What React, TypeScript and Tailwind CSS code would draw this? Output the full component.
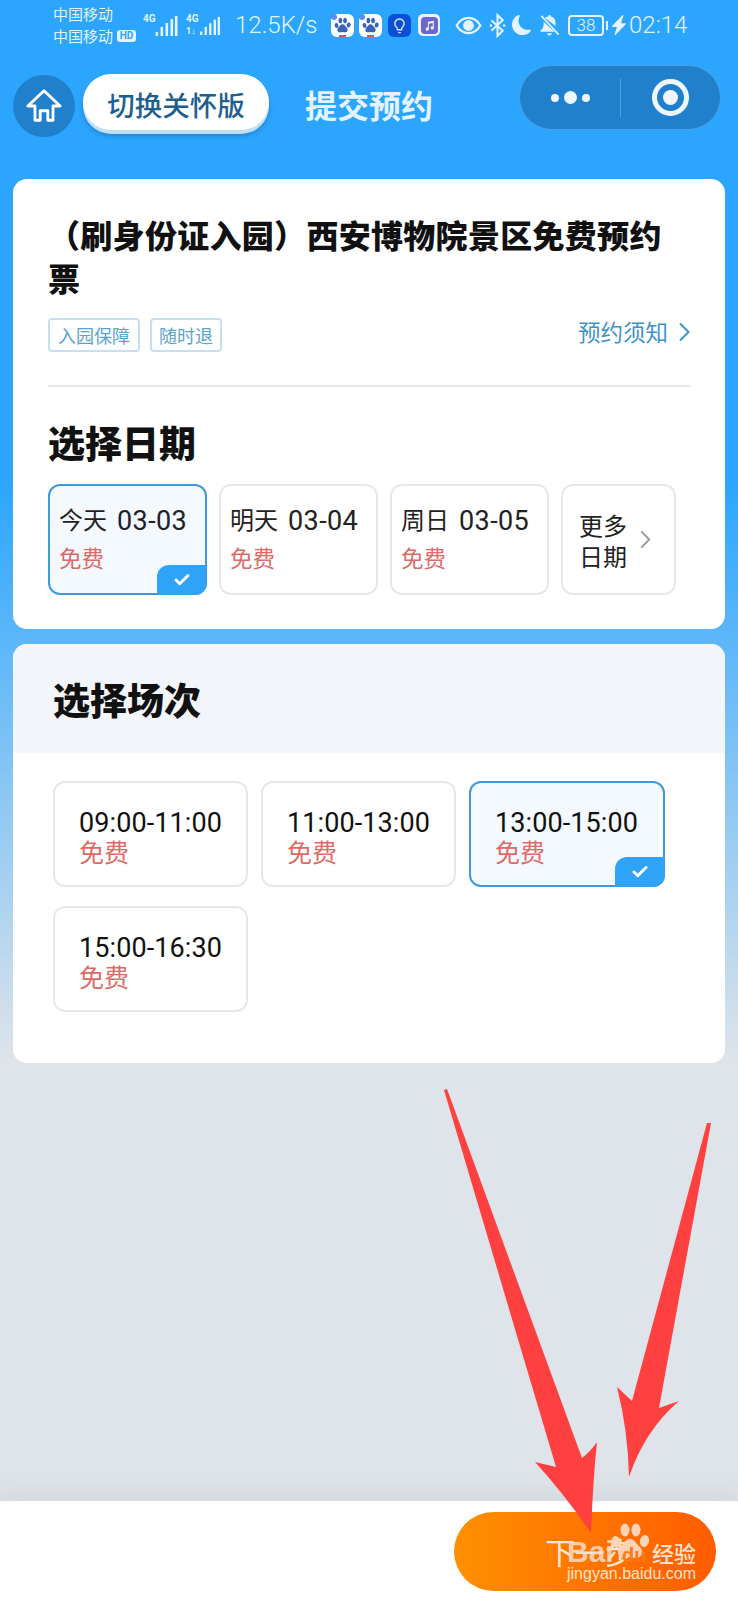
import { Check } from 'lucide-react'
import { BsMoonFill, BsLightningChargeFill } from 'react-icons/bs'

const dates = [
  { label: '今天', date: '03-03', selected: true },
  { label: '明天', date: '03-04', selected: false },
  { label: '周日', date: '03-05', selected: false },
]

const slots = [
  { time: '09:00-11:00', selected: false },
  { time: '11:00-13:00', selected: false },
  { time: '13:00-15:00', selected: true },
  { time: '15:00-16:30', selected: false },
]

function Paw({ className, fill }: { className?: string; fill: string }) {
  return (
    <svg viewBox="0 0 40 40" className={className} fill={fill}>
      <ellipse cx="6" cy="20" rx="4.5" ry="6" transform="rotate(-15 6 20)" />
      <ellipse cx="15" cy="8" rx="4.5" ry="6.5" />
      <ellipse cx="26" cy="8" rx="4.5" ry="6.5" />
      <ellipse cx="34.5" cy="19" rx="4.5" ry="6" transform="rotate(15 34.5 19)" />
      <path d="M20 17c5 0 6 5 10 8 4 4 2 12-5 11-2 0-3-1-5-1s-3 1-5 1c-7 1-9-7-5-11 4-3 5-8 10-8z" />
    </svg>
  )
}

function SignalBars({ className }: { className?: string }) {
  return (
    <svg viewBox="0 0 22 20" className={className} fill="#e3f3ff">
      <rect x="0" y="16" width="2.6" height="4" />
      <rect x="5" y="11" width="2.6" height="9" />
      <rect x="10" y="7" width="2.6" height="13" />
      <rect x="15" y="3" width="2.6" height="17" />
      <rect x="19.4" y="0" width="2.6" height="20" />
    </svg>
  )
}

function Chevron({ className }: { className?: string }) {
  return (
    <svg viewBox="0 0 12 20" className={className} fill="none" stroke="currentColor" strokeWidth="2">
      <path d="M2 1.500L10.500 10L2 18.500" />
    </svg>
  )
}

function BaiduApp({ ml }: { ml: string }) {
  return (
    <div className={`relative w-[23px] h-[23px] rounded-[6px] bg-white flex items-center justify-center ${ml}`}>
      <Paw className="w-[17px] h-[17px]" fill="#3a64b8" />
      <div className="absolute left-0 top-0 w-[6px] h-[6px] rounded-full bg-[#5a8fe8]" />
      <div className="absolute bottom-0 left-[8px] w-[7px] h-[2px] bg-[#d9534f]" />
    </div>
  )
}

function StatusBar() {
  return (
    <div className="h-[50px] flex items-center pl-[53px] text-[#e3f3ff]">
      <div className="w-[84px] text-[15px] leading-[22px]">
        <div>中国移动</div>
        <div className="flex items-center">
          中国移动
          <span className="ml-[4px] w-[19px] h-[12px] rounded-[3px] bg-[#e3f3ff] text-[#2ba5fe] text-[10px] leading-[12px] font-bold text-center font-['Roboto']">
            HD
          </span>
        </div>
      </div>
      <div className="relative ml-[6px] w-[35px] h-[22px]">
        <span className="absolute left-0 top-0 text-[10px] leading-[10px] font-bold font-['Roboto']">4G</span>
        <SignalBars className="absolute right-0 bottom-0 w-[23px] h-[20px]" />
      </div>
      <div className="relative ml-[8px] w-[34px] h-[22px]">
        <span className="absolute left-0 top-0 text-[10px] leading-[10px] font-bold font-['Roboto']">4G</span>
        <span className="absolute left-0 bottom-0 text-[9px] leading-[9px] font-bold font-['Roboto']">1↓</span>
        <SignalBars className="absolute right-0 bottom-0 w-[20px] h-[20px]" />
      </div>
      <span className="ml-[15px] w-[81px] text-[24px] font-['Roboto'] font-light whitespace-nowrap">12.5K/s</span>
      <BaiduApp ml="ml-[15px]" />
      <BaiduApp ml="ml-[5px]" />
      <div className="ml-[6px] w-[23px] h-[23px] rounded-[6px] bg-[#0b4fd8] flex items-center justify-center">
        <svg viewBox="0 0 24 24" className="w-[17px] h-[17px]" fill="none" stroke="#dbe8ff" strokeWidth="2">
          <path d="M9 18h6M10 22h4M8 14.500A6.500 6.500 0 1 1 16 14.500c-.8.7-1 1.500-1 3.500H9c0-2-.2-2.800-1-3.500z" />
        </svg>
      </div>
      <div className="ml-[7px] w-[22px] h-[22px] rounded-[5px] bg-[#eef0fb] flex items-center justify-center">
        <div className="w-[17px] h-[17px] rounded-[4px] bg-[#6a68cf] flex items-center justify-center">
          <svg viewBox="0 0 24 24" className="w-[13px] h-[13px]" fill="#eef0fb">
            <path d="M9 5l11-2v13.500a3 3 0 1 1-2-2.800V7.500l-7 1.300v9.700a3 3 0 1 1-2-2.800z" />
          </svg>
        </div>
      </div>
      <svg viewBox="0 0 28 20" className="ml-[15px] w-[27px] h-[19px]" fill="none" stroke="#e3f3ff" strokeWidth="2.400">
        <path d="M1.500 10C5 4 9 2 14 2s9 2 12.500 8C23 16 19 18 14 18S5 16 1.500 10z" />
        <circle cx="14" cy="10" r="4.500" fill="#e3f3ff" />
      </svg>
      <svg viewBox="0 0 18 26" className="ml-[7px] w-[17px] h-[25px]" fill="none" stroke="#e3f3ff" strokeWidth="2.200">
        <path d="M2.500 7.500L14.500 18.500L9 24V2L14.500 7.500L2.500 18.500" />
        <circle cx="2" cy="13" r="1.400" fill="#e3f3ff" stroke="none" />
        <circle cx="16" cy="13" r="1.400" fill="#e3f3ff" stroke="none" />
      </svg>
      <BsMoonFill className="ml-[6px] w-[20px] h-[20px]" />
      <svg viewBox="0 0 22 24" className="ml-[7px] w-[21px] h-[23px]" fill="#e3f3ff">
        <path d="M9.500 2.500a1.500 1.500 0 0 1 3 0c3 .7 4.800 3.200 4.800 6.500v3.500L6 3.800c.9-.7 2.100-1.100 3.500-1.300zM4.900 8L16.200 18.500H1.500v-1.200c2.200-1.600 3.400-3.900 3.400-7.300zM8.500 20h5a2.500 2.500 0 0 1-5 0z" />
        <path d="M2.500 2L20.500 21.500" stroke="#e3f3ff" strokeWidth="1.800" />
      </svg>
      <div className="ml-[8px] flex items-center">
        <div className="w-[36px] h-[21px] rounded-[4px] border-2 border-[#e3f3ff] text-[17px] leading-[17px] text-center font-['Roboto'] font-light">
          38
        </div>
        <div className="ml-[2px] w-[2px] h-[9px] bg-[#e3f3ff]" />
      </div>
      <BsLightningChargeFill className="ml-[1px] w-[20px] h-[20px]" />
      <span className="text-[24px] leading-none font-['Roboto'] font-light whitespace-nowrap">02:14</span>
    </div>
  )
}

function NavBar() {
  return (
    <div className="h-[129px] flex items-start">
      <div className="ml-[13px] mt-[25px] w-[62px] h-[62px] rounded-full bg-[#2080cc] flex items-center justify-center">
        <svg viewBox="0 0 40 40" className="w-[38px] h-[38px]" fill="none" stroke="#ffffff" strokeWidth="3" strokeLinejoin="round">
          <path d="M20 4L37 20H29.500V35H24V25H16V35H10.500V20H3z" />
        </svg>
      </div>
      <div className="ml-[8px] mt-[24px] w-[186px] h-[56px] rounded-full bg-white shadow-[0_4px_0_#bfdff5,0_6px_4px_rgba(20,90,150,0.45)] flex items-center justify-center pt-[6px] text-[27.500px] font-medium text-[#1f5f8f]">
        切换关怀版
      </div>
      <div className="ml-[36px] mt-[32px] text-[32px] leading-[44px] font-bold text-[#e4f3ff] whitespace-nowrap">提交预约</div>
      <div className="ml-[86px] mt-[15px] w-[202px] h-[65px] rounded-full bg-[#2080cc] border border-[#4aa3e6] flex items-center">
        <div className="w-[100px] flex items-center justify-center gap-[5px]">
          <span className="w-[8px] h-[8px] rounded-full bg-[#eef7ff]" />
          <span className="w-[13px] h-[13px] rounded-full bg-[#eef7ff]" />
          <span className="w-[8px] h-[8px] rounded-full bg-[#eef7ff]" />
        </div>
        <div className="w-px h-[39px] bg-[#4f9fdd]" />
        <div className="flex-1 flex items-center justify-center">
          <div className="w-[37px] h-[37px] rounded-full border-[5px] border-[#eef7ff] flex items-center justify-center">
            <div className="w-[15px] h-[15px] rounded-full bg-[#eef7ff]" />
          </div>
        </div>
      </div>
    </div>
  )
}

function CheckCorner() {
  return (
    <div className="absolute -right-[2px] -bottom-[2px] w-[50px] h-[30px] rounded-tl-[12px] rounded-br-[12px] bg-[#2ea3f7] flex items-center justify-center">
      <Check className="w-[18px] h-[18px] text-white" strokeWidth={4} />
    </div>
  )
}

function DateCard({ label, date, selected }: { label: string; date: string; selected: boolean }) {
  return (
    <div className={`relative w-[159px] h-[111px] rounded-[12px] border-2 pl-[9px] ${selected ? 'border-[#3f9ad9] bg-[#f3f9fe]' : 'border-[#e6e9ec] bg-white'}`}>
      <div className="mt-[18px] flex items-center text-[24px] leading-[34px] text-[#222222] whitespace-nowrap font-['Roboto','Noto_Sans_CJK_SC',sans-serif]">
        {label}
        <span className="ml-[10px] text-[27px] tracking-[0.4px]">{date}</span>
      </div>
      <div className="mt-[3px] text-[22.500px] leading-[32px] text-[#de6a66]">免费</div>
      {selected && <CheckCorner />}
    </div>
  )
}

function SlotCard({ time, selected }: { time: string; selected: boolean }) {
  return (
    <div className={`relative h-[106px] rounded-[12px] border-2 pl-[24px] ${selected ? 'border-[#3f9ad9] bg-[#f3f9fe]' : 'border-[#e6e9ec] bg-white'}`}>
      <div className="mt-[23px] text-[27px] tracking-[0.1px] leading-[34px] text-[#111111] font-['Roboto',sans-serif]">{time}</div>
      <div className="text-[25px] leading-[32px] -mt-[5px] text-[#de6a66]">免费</div>
      {selected && <CheckCorner />}
    </div>
  )
}

function Arrows() {
  return (
    <svg viewBox="0 0 738 1600" className="absolute inset-0 w-[738px] h-[1600px] pointer-events-none" fill="#ff4040">
      <path d="M444 1090L447 1089L582 1458Q590 1452 597 1442Q593 1480 591 1533Q565 1495 535 1462L556 1467z" />
      <path d="M707 1123L711 1123L659 1408L679 1401Q645 1430 629 1477Q628 1430 617 1387L632 1401z" />
    </svg>
  )
}

export default function App() {
  return (
    <div className="relative w-[738px] h-[1600px] overflow-hidden flex flex-col bg-[linear-gradient(180deg,#2ba5fe_0px,#2ba5fe_480px,#dfe4ea_1065px)] font-['Noto_Sans_CJK_SC','Noto_Sans',sans-serif]">
      <StatusBar />
      <NavBar />

      <div className="mx-[13px] rounded-[14px] bg-white px-[35px] pt-[34px] pb-[34px]">
        <h1 className="text-[32px] tracking-[0.3px] leading-[43px] font-black text-[#111111]">（刷身份证入园）西安博物院景区免费预约票</h1>
        <div className="mt-[19px] flex items-center">
          <span className="h-[34px] w-[92px] rounded-[4px] border-2 border-[#c5e0ee] text-center text-[18px] leading-[30px] text-[#5aa5cf]">入园保障</span>
          <span className="ml-[10px] h-[34px] w-[72px] rounded-[4px] border-2 border-[#c5e0ee] text-center text-[18px] leading-[30px] text-[#5aa5cf]">随时退</span>
          <div className="ml-auto -mt-[6px] flex items-center text-[22.500px] text-[#3d93cb]">
            预约须知
            <Chevron className="ml-[10px] w-[12px] h-[20px]" />
          </div>
        </div>
        <div className="mt-[33px] h-[2px] bg-[#e5e7eb]" />
        <h2 className="mt-[30px] text-[37px] leading-[50px] font-black text-[#111111]">选择日期</h2>
        <div className="mt-[17px] flex gap-[12px]">
          {dates.map((d) => (
            <DateCard key={d.date} {...d} />
          ))}
          <div className="w-[115px] h-[111px] rounded-[12px] border-2 border-[#e6e9ec] bg-white flex items-center pl-[16px]">
            <div className="text-[24px] leading-[31px] text-[#222222]">
              更多
              <br />
              日期
            </div>
            <Chevron className="ml-[12px] w-[12px] h-[19px] text-[#9a9a9a]" />
          </div>
        </div>
      </div>

      <div className="mx-[13px] mt-[15px] rounded-[14px] overflow-hidden bg-white">
        <div className="h-[109px] bg-[#f2f6fa] flex items-center pl-[40px]">
          <h2 className="text-[37px] leading-[50px] font-black text-[#111111]">选择场次</h2>
        </div>
        <div className="grid grid-cols-[195px_195px_196px] gap-x-[13px] gap-y-[19px] pl-[40px] pt-[28px] pb-[51px]">
          {slots.map((s) => (
            <SlotCard key={s.time} {...s} />
          ))}
        </div>
      </div>

      <div className="mt-auto h-[99px] bg-white shadow-[0_-8px_24px_rgba(60,70,80,0.08)] flex justify-end">
        <div className="relative mt-[11px] mr-[22px] w-[262px] h-[79px] rounded-full bg-[linear-gradient(90deg,#ff9000,#ff5c00)] flex items-center justify-center pl-[10px] text-[30px] text-[#ffe9d6]">
          下一步
          <span className="absolute left-[113px] top-[25px] text-[30px] leading-[30px] font-bold text-[#ffd9c2]/90 font-['Liberation_Sans',sans-serif]">Bai</span>
          <Paw className="absolute left-[156px] top-[10px] w-[40px] h-[40px]" fill="#ffd3b8" />
          <span className="absolute left-[168px] top-[33px] text-[20px] leading-[20px] font-bold text-[#ff7a14] font-['Liberation_Sans',sans-serif]">du</span>
          <span className="absolute left-[198px] top-[24px] text-[22px] leading-[32px] font-medium text-[#ffe3d0] whitespace-nowrap">经验</span>
          <span className="absolute left-[113px] top-[49px] text-[16px] leading-[26px] text-[#ffe3d0] whitespace-nowrap font-['Liberation_Sans',sans-serif]">jingyan.baidu.com</span>
        </div>
      </div>

      <Arrows />
    </div>
  )
}
